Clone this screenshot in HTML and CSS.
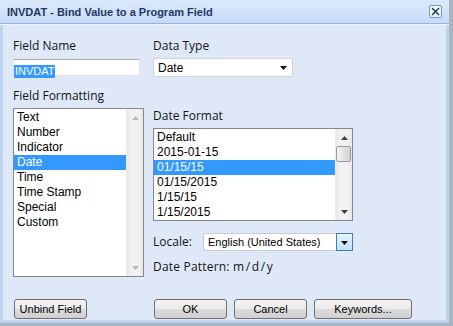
FILE: index.html
```html
<!DOCTYPE html>
<html>
<head>
<meta charset="utf-8">
<title>Bind Value</title>
<link rel="stylesheet" href="styles.css">
</head>
<body>
<div class="window">
  <div class="titlebar">
    <span class="title">INVDAT - Bind Value to a Program Field</span>
    <span class="close"><svg width="9" height="9" viewBox="0 0 9 9"><path d="M1 1L8 8M8 1L1 8" stroke="#1e3a64" stroke-width="1.5" fill="none"/></svg></span>
  </div>
  <div class="content">
    <div class="columns">
      <div class="col left">
        <div class="label">Field Name</div>
        <div class="textbox"><span class="sel">INVDAT</span></div>
        <div class="label ff">Field Formatting</div>
        <div class="listbox fmt">
          <div class="items">
            <div class="item">Text</div>
            <div class="item">Number</div>
            <div class="item">Indicator</div>
            <div class="item selected">Date</div>
            <div class="item">Time</div>
            <div class="item">Time Stamp</div>
            <div class="item">Special</div>
            <div class="item">Custom</div>
          </div>
          <div class="vscroll disabled">
            <div class="arrow"><svg width="7" height="4" viewBox="0 0 7 4"><path d="M0 4L3.5 0L7 4Z" fill="#b8b8b8"/></svg></div>
            <div class="track"></div>
            <div class="arrow"><svg width="7" height="4" viewBox="0 0 7 4"><path d="M0 0L7 0L3.5 4Z" fill="#b8b8b8"/></svg></div>
          </div>
        </div>
      </div>
      <div class="col right">
        <div class="label">Data Type</div>
        <div class="select">
          <span class="seltext">Date</span>
          <svg class="caret" width="7" height="4" viewBox="0 0 7 4"><path d="M0 0L7 0L3.5 4Z" fill="#111"/></svg>
        </div>
        <div class="label df">Date Format</div>
        <div class="listbox datefmt">
          <div class="items">
            <div class="item">Default</div>
            <div class="item">2015-01-15</div>
            <div class="item selected">01/15/15</div>
            <div class="item">01/15/2015</div>
            <div class="item">1/15/15</div>
            <div class="item">1/15/2015</div>
          </div>
          <div class="vscroll">
            <div class="arrow up"><svg width="7" height="4" viewBox="0 0 7 4"><path d="M0 4L3.5 0L7 4Z" fill="#404040"/></svg></div>
            <div class="thumb"></div>
            <div class="track"></div>
            <div class="arrow"><svg width="7" height="4" viewBox="0 0 7 4"><path d="M0 0L7 0L3.5 4Z" fill="#404040"/></svg></div>
          </div>
        </div>
        <div class="locale-row">
          <span class="label locale-label">Locale:</span>
          <div class="combo">
            <span class="combo-text">English (United States)</span>
            <span class="combo-btn"><svg width="7" height="4" viewBox="0 0 7 4"><path d="M0 0L7 0L3.5 4Z" fill="#111"/></svg></span>
          </div>
        </div>
        <div class="label pattern">Date Pattern: <span class="pat">m/d/y</span></div>
      </div>
    </div>
    <div class="footer">
      <button class="btn unbind">Unbind Field</button>
      <button class="btn ok">OK</button>
      <button class="btn cancel">Cancel</button>
      <button class="btn keywords">Keywords...</button>
    </div>
  </div>
</div>
</body>
</html>
```

FILE: styles.css
```css
html, body {
  margin: 0;
  padding: 0;
}
body {
  width: 453px;
  height: 326px;
  background: #a9b4c2;
  overflow: hidden;
}
.window {
  width: 449px;
  height: 323px;
  box-sizing: border-box;
  background: #bcd3f2;
  display: flex;
  flex-direction: column;
}
.titlebar {
  height: 23px;
  flex: none;
  display: flex;
  align-items: center;
  justify-content: space-between;
  padding: 0 7px 0 7px;
  background: linear-gradient(#dce9fb, #c6dbf7);
  border-bottom: 1px solid #93b6e4;
  box-shadow: 0 1px 0 #eef4fc;
  margin-bottom: 1px;
}
.title {
  font-family: "Liberation Sans", Arial, sans-serif;
  font-weight: bold;
  font-size: 11px;
  line-height: 14px;
  color: #1e3a64;
  padding-top: 1px;
}
.close {
  width: 13px;
  height: 13px;
  box-sizing: border-box;
  border: 1px solid #7595c4;
  border-radius: 2px;
  background: linear-gradient(#ffffff, #e3edfb);
  display: flex;
  align-items: center;
  justify-content: center;
  margin-top: -1px;
}
.content {
  flex: 1;
  margin: 0 3px 3px 3px;
  background: #dfe8f6;
  padding: 13px 0 0 10px;
  display: flex;
  flex-direction: column;
}
.columns {
  display: flex;
}
.col {
  display: flex;
  flex-direction: column;
  align-items: flex-start;
}
.col.left {
  width: 140px;
}
.label {
  font-family: "Open Sans", "DejaVu Sans", sans-serif;
  font-size: 12px;
  line-height: 16px;
  color: #141414;
}
.textbox {
  margin-top: 5px;
  width: 127px;
  height: 17px;
  box-sizing: border-box;
  background: #fff;
  border: 1px solid #e2e8ef;
  border-top-color: #abadb3;
  padding-top: 1px;
}
.sel {
  display: inline-block;
  background: #3399ff;
  color: #fff;
  font-family: "Liberation Sans", Arial, sans-serif;
  font-size: 11px;
  line-height: 13px;
  padding: 0 0 0 1px;
  width: 40px;
}
.label.ff {
  margin-top: 12px;
}
.listbox {
  margin-top: 4px;
  box-sizing: border-box;
  border: 1px solid #828790;
  background: #fff;
  display: flex;
  overflow: hidden;
}
.listbox.fmt {
  width: 131px;
  height: 169px;
}
.listbox.datefmt {
  width: 200px;
  height: 93px;
}
.items {
  flex: 1;
  padding-top: 1px;
  overflow: hidden;
}
.item {
  font-family: "Liberation Sans", Arial, sans-serif;
  font-size: 12px;
  line-height: 15px;
  height: 15px;
  padding-left: 3px;
  color: #000;
  white-space: nowrap;
}
.item.selected {
  background: #3399ff;
  color: #fff;
}
.vscroll {
  width: 17px;
  flex: none;
  background: linear-gradient(90deg, #e8e8e8, #f2f2f2 30%, #f2f2f2 70%, #e8e8e8);
  border-left: 1px solid #ececec;
  box-sizing: border-box;
  display: flex;
  flex-direction: column;
}
.arrow {
  height: 17px;
  flex: none;
  display: flex;
  align-items: center;
  justify-content: center;
}
.track {
  flex: 1;
}
.thumb {
  height: 16px;
  margin: 0 1px 0 0;
  box-sizing: border-box;
  border: 1px solid #9a9a9a;
  border-radius: 2px;
  background: linear-gradient(90deg, #f4f4f4, #e2e2e2 50%, #d4d4d4);
  flex: none;
}
.col.right {
  width: 210px;
}
.select {
  margin-top: 4px;
  width: 140px;
  height: 19px;
  box-sizing: border-box;
  border: 1px solid #d0d4da;
  background: #fff;
  display: flex;
  align-items: center;
  justify-content: space-between;
  padding: 0 5px 0 4px;
}
.seltext {
  font-family: "Liberation Sans", Arial, sans-serif;
  font-size: 12px;
  color: #000;
}
.label.df {
  margin-top: 31px;
}
.locale-row {
  margin-top: 12px;
  display: flex;
  align-items: center;
  height: 18px;
}
.locale-label {
  width: 50px;
}
.combo {
  width: 150px;
  height: 18px;
  display: flex;
  box-sizing: border-box;
}
.combo-text {
  flex: 1;
  box-sizing: border-box;
  border: 1px solid #c3cedc;
  border-right: none;
  background: #fff;
  font-family: "Liberation Sans", Arial, sans-serif;
  font-size: 11px;
  line-height: 16px;
  padding-left: 4px;
  color: #000;
}
.combo-btn {
  width: 17px;
  box-sizing: border-box;
  border: 1px solid #3c7fb1;
  background: linear-gradient(#e6f3fc, #c0e0f6);
  display: flex;
  align-items: center;
  justify-content: center;
  padding-top: 2px;
}
.label.pattern {
  margin-top: 8px;
  letter-spacing: 0.2px;
}
.pat {
  letter-spacing: 1.6px;
}
.footer {
  margin-top: 22px;
  display: flex;
  align-items: center;
}
.btn {
  height: 20px;
  box-sizing: border-box;
  border: 1px solid #707070;
  border-radius: 3px;
  background: linear-gradient(#f3f3f3, #ebebeb 50%, #dddddd 51%, #cfcfcf);
  font-family: "Liberation Sans", Arial, sans-serif;
  font-size: 11px;
  color: #000;
  padding: 0;
  margin: 0;
}
.btn.unbind {
  width: 73px;
  margin-left: 1px;
}
.btn.ok {
  width: 73px;
  margin-left: 67px;
}
.btn.cancel {
  width: 73px;
  margin-left: 7px;
}
.btn.keywords {
  width: 98px;
  margin-left: 7px;
}
```
